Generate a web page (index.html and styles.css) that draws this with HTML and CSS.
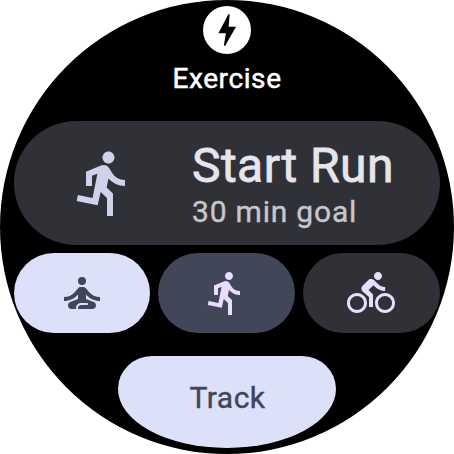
FILE: index.html
```html
<!DOCTYPE html>
<html lang="en">
<head>
<meta charset="utf-8">
<title>Exercise</title>
<link rel="stylesheet" href="styles.css">
</head>
<body>
<svg width="0" height="0" class="defs">
  <symbol id="run" viewBox="0 0 24 24"><path d="M13.49 5.48c1.1 0 2-.9 2-2s-.9-2-2-2-2 .9-2 2 .9 2 2 2zm-3.6 13.9l1-4.4 2.1 2v6h2v-7.5l-2.1-2 .6-3c1.3 1.5 3.3 2.5 5.5 2.5v-2c-1.9 0-3.5-1-4.3-2.4l-1-1.6c-.4-.6-1-1-1.7-1-.3 0-.5.1-.8.1l-5.2 2.2v4.7h2v-3.4l1.8-.7-1.6 8.1-4.9-1-.4 2 7 1.4z"/></symbol>
</svg>
<main class="watch">
  <header class="header">
    <svg class="bolt" viewBox="0 0 48 48"><circle cx="24" cy="24" r="24" fill="#fff"/><path d="M26.7 8.2 25.6 20.8H33L22.2 39.8H20.8L22.9 27.2H15.4L25.4 8.2Z" fill="#000"/></svg>
    <h1 class="title">Exercise</h1>
  </header>
  <button class="start">
    <svg class="start-icon"><use href="#run"/></svg>
    <span class="labels">
      <span class="primary">Start Run</span>
      <span class="secondary">30 min goal</span>
    </span>
  </button>
  <div class="activities">
    <button class="chip chip-light" aria-label="Yoga">
      <svg class="icon" viewBox="0 0 24 24"><circle cx="12" cy="6" r="2"/><path d="M21 16v-2c-2.24 0-4.16-.96-5.6-2.68l-1.34-1.6A1.98 1.98 0 0 0 12.53 9h-1.05c-.61 0-1.17.26-1.55.72l-1.34 1.6C7.16 13.04 5.24 14 3 14v2c2.77 0 5.19-1.17 7-3.25V15l-3.88 1.55C5.45 16.82 5 17.48 5 18.21 5 19.2 5.8 20 6.79 20H9v-.5c0-1.38 1.12-2.5 2.5-2.5h3c.28 0 .5.22.5.5s-.22.5-.5.5h-3c-.83 0-1.5.67-1.5 1.5v.5h7.21C18.2 20 19 19.2 19 18.21c0-.73-.45-1.39-1.12-1.66L14 15v-2.25C15.81 14.83 18.23 16 21 16z"/></svg>
    </button>
    <button class="chip chip-mid" aria-label="Run">
      <svg class="icon"><use href="#run"/></svg>
    </button>
    <button class="chip chip-dark" aria-label="Bike">
      <svg class="icon" viewBox="0 0 24 24"><path d="M15.5 5.5c1.1 0 2-.9 2-2s-.9-2-2-2-2 .9-2 2 .9 2 2 2zM5 12c-2.8 0-5 2.2-5 5s2.2 5 5 5 5-2.2 5-5-2.2-5-5-5zm0 8.5c-1.9 0-3.5-1.6-3.5-3.5s1.6-3.5 3.5-3.5 3.5 1.6 3.5 3.5-1.6 3.5-3.5 3.5zm5.8-10l2.4-2.4.8.8c1.3 1.3 3 2.1 5.1 2.1V9c-1.5 0-2.7-.6-3.6-1.5l-1.9-1.9c-.5-.4-1-.6-1.6-.6s-1.1.2-1.4.6L7.8 8.4c-.4.4-.6.9-.6 1.4 0 .6.2 1.1.6 1.4L11 14v5h2v-6.2l-2.2-2.3zM19 12c-2.8 0-5 2.2-5 5s2.2 5 5 5 5-2.2 5-5-2.2-5-5-5zm0 8.5c-1.9 0-3.5-1.6-3.5-3.5s1.6-3.5 3.5-3.5 3.5 1.6 3.5 3.5-1.6 3.5-3.5 3.5z"/></svg>
    </button>
  </div>
  <button class="track">Track</button>
</main>
</body>
</html>
```

FILE: styles.css
```css
* { box-sizing: border-box; }
body { margin: 0; background: #fff; overflow: hidden; }
.defs { display: none; }
button {
  border: 0;
  margin: 0;
  padding: 0;
  font-family: inherit;
  font-weight: inherit;
}
svg { display: block; fill: currentColor; flex: none; }
.watch {
  width: 454px;
  height: 454px;
  padding: 6px 14px 0;
  border-radius: 50%;
  background: #000;
  overflow: hidden;
  display: flex;
  flex-direction: column;
  align-items: center;
  font-family: Roboto, sans-serif;
  font-weight: 400;
}
.header {
  height: 115px;
  display: flex;
  flex-direction: column;
  align-items: center;
}
.bolt { width: 48px; height: 48px; }
.title {
  margin: 8px 0 0;
  color: #fff;
  font-size: 28px;
  line-height: 34px;
  font-weight: 400;
  letter-spacing: 0.6px;
  -webkit-text-stroke: 0.5px currentColor;
}
.start {
  width: 426px;
  height: 124px;
  padding-left: 54px;
  border-radius: 62px;
  background: #303136;
  display: flex;
  align-items: center;
  gap: 52px;
  text-align: left;
}
.start-icon { width: 72px; height: 72px; color: #ced3eb; }
.labels { display: flex; flex-direction: column; padding-top: 2px; }
.primary {
  font-size: 48px;
  line-height: 56px;
  letter-spacing: 0.45px;
  color: #e6e5ec;
  -webkit-text-stroke: 0.8px currentColor;
}
.secondary {
  font-size: 30px;
  line-height: 36px;
  letter-spacing: 0.8px;
  color: #c7c6cc;
  -webkit-text-stroke: 0.4px currentColor;
}
.activities {
  width: 426px;
  height: 80px;
  margin-top: 8px;
  display: grid;
  grid-template-columns: 136px 137px 137px;
  gap: 8px;
}
.chip {
  border-radius: 40px;
  display: flex;
  align-items: center;
  justify-content: center;
}
.icon { width: 48px; height: 48px; }
.chip-light { background: #dce1f9; color: #404659; }
.chip-mid { background: #414659; color: #e9ddff; }
.chip-mid .icon, .chip-dark .icon { margin-right: 1px; }
.chip-dark { background: #303136; color: #e9ddff; }
.track {
  width: 218px;
  height: 92px;
  margin-top: 23px;
  padding: 0 0 10px 1px;
  border-radius: 34px 34px 109px 109px / 33px 33px 59px 59px;
  background: #dce1f9;
  color: #404659;
  font-size: 30px;
  letter-spacing: 0.5px;
  -webkit-text-stroke: 0.4px currentColor;
}
```
